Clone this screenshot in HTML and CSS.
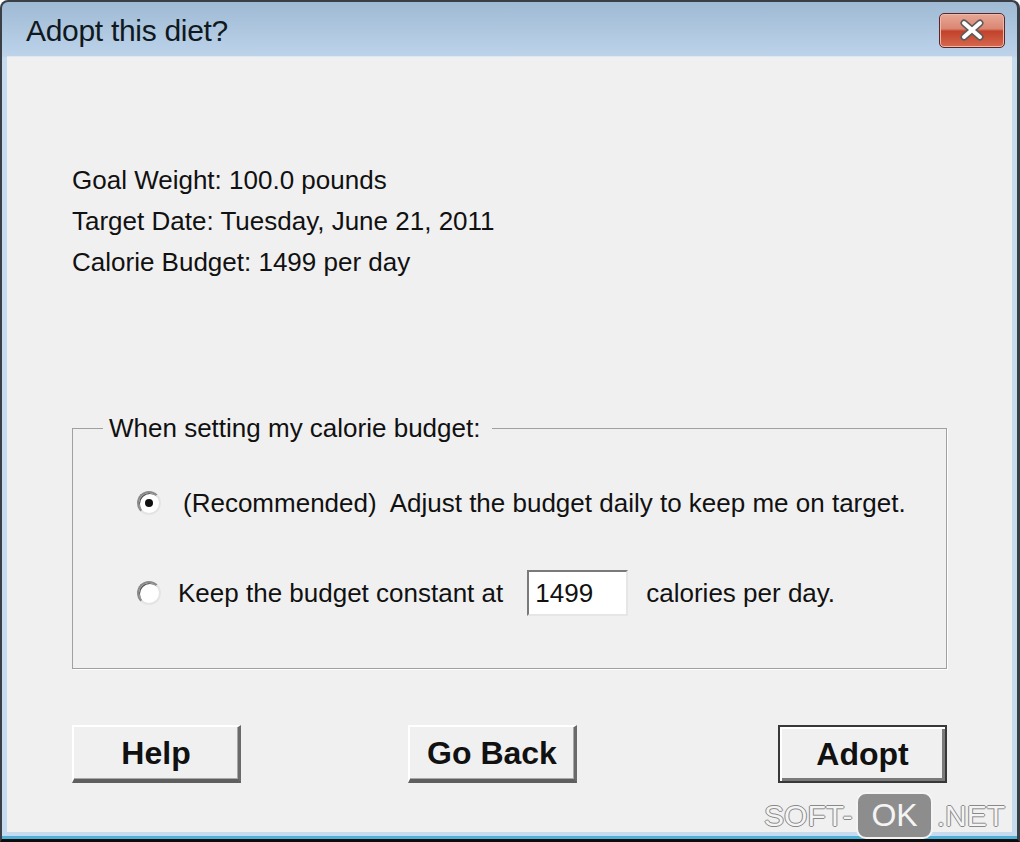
FILE: index.html
```html
<!DOCTYPE html>
<html lang="en">
<head>
    <meta charset="UTF-8">
    <title>Adopt this diet?</title>
    <link rel="stylesheet" href="styles.css">
</head>
<body>
<div class="window">
    <div class="titlebar">
        <span class="title">Adopt this diet?</span>
        <span class="close">
            <svg width="28" height="22" viewBox="0 0 28 22">
                <path d="M6 4 L22 18 M22 4 L6 18" stroke="#5b5b5b" stroke-width="7" stroke-linecap="round"/>
                <path d="M6 4 L22 18 M22 4 L6 18" stroke="#ffffff" stroke-width="4" stroke-linecap="round"/>
            </svg>
        </span>
    </div>

    <div class="client">
        <div class="info">
            <div>Goal Weight: 100.0 pounds</div>
            <div>Target Date: Tuesday, June 21, 2011</div>
            <div>Calorie Budget: 1499 per day</div>
        </div>

        <fieldset class="group">
            <legend>When setting my calorie budget:</legend>
            <div class="option">
                <span class="radio checked"></span>
                <span class="label first">(Recommended)&nbsp; Adjust the budget daily to keep me on target.</span>
            </div>
            <div class="option">
                <span class="radio"></span>
                <span class="label">Keep the budget constant at</span>
                <span class="field">1499</span>
                <span class="label after">calories per day.</span>
            </div>
        </fieldset>

        <div class="buttons">
            <button class="btn">Help</button>
            <button class="btn back">Go Back</button>
            <button class="btn default">Adopt</button>
        </div>
    </div>

    <div class="watermark">SOFT-<span class="ok">OK</span>.NET</div>
</div>
</body>
</html>
```

FILE: styles.css
```css
body {
    margin: 0;
    overflow: hidden;
    font-family: "Liberation Sans", Arial, sans-serif;
}
.window {
    position: relative;
    width: 1020px;
    height: 842px;
    box-sizing: border-box;
    border: 2px solid #3a3f45;
    border-right-width: 3px;
    border-bottom: 3px solid #0c0c0c;
    border-radius: 8px 8px 0 0;
    padding-bottom: 7px;
    background: linear-gradient(#9fbad4, #bcd3ea 54px, #c6dbef 56px);
    box-shadow: inset 0 -3px 0 #4fb0d8;
    display: flex;
    flex-direction: column;
}
.titlebar {
    height: 50px;
    padding: 4px 12px 0 24px;
    display: flex;
    align-items: center;
    justify-content: space-between;
}
.title {
    font-size: 30px;
    color: #101820;
    letter-spacing: -0.3px;
}
.close {
    width: 64px;
    height: 33px;
    margin-top: -2px;
    border: 1px solid #5a2626;
    border-radius: 5px;
    background: linear-gradient(#e8a795, #d98672 45%, #c2412a 52%, #d5694f);
    box-shadow: inset 0 0 0 1px #f0b8a8;
    display: flex;
    align-items: center;
    justify-content: center;
}
.client {
    flex: 1;
    margin: 0 5px;
    background: #f0f0f0;
    color: #111;
    font-size: 26px;
    border-top: 1px solid #dfe8f1;
}
.info {
    padding: 103px 0 0 65px;
    line-height: 41px;
}
.group {
    margin: 130px 65px 0;
    padding: 37px 0 52px 0;
    border: 1px solid #a0a0a0;
    box-shadow: 1px 1px 0 #fff;
}
.group legend {
    margin-left: 30px;
    padding: 0 12px 0 6px;
    line-height: 30px;
}
.option {
    height: 46px;
    padding-left: 64px;
    display: flex;
    align-items: center;
}
.option + .option {
    margin-top: 44px;
}
.radio {
    position: relative;
    width: 20px;
    height: 20px;
    border-radius: 50%;
    border: 2px solid;
    border-color: #8a8a8a #e4e4e4 #e4e4e4 #8a8a8a;
    background: #fff;
    box-shadow: inset 1px 1px 0 #555;
    flex: none;
}
.radio.checked::after {
    content: "";
    position: absolute;
    left: 6px;
    top: 6px;
    width: 8px;
    height: 8px;
    border-radius: 50%;
    background: #111;
}
.label {
    margin-left: 17px;
}
.label.first {
    margin-left: 22px;
}
.label.after {
    margin-left: 18px;
}
.field {
    margin-left: 24px;
    box-sizing: border-box;
    width: 101px;
    height: 46px;
    padding-left: 6px;
    line-height: 42px;
    background: #fff;
    border: 2px solid;
    border-color: #7a7a7a #e6e6e6 #e6e6e6 #7a7a7a;
}
.buttons {
    display: flex;
    padding: 0 65px;
    margin-top: 56px;
}
.btn {
    width: 169px;
    height: 58px;
    box-sizing: border-box;
    font-family: "Liberation Sans", Arial, sans-serif;
    font-size: 32px;
    font-weight: bold;
    color: #111;
    background: #f0f0f0;
    border-style: solid;
    border-width: 2px 3px 4px 2px;
    border-color: #ffffff #6a6a6a #5f5f5f #ffffff;
    box-shadow: inset -1px -1px 0 #a8a8a8;
    padding: 0;
}
.btn.back {
    margin-left: 167px;
}
.btn.default {
    margin-left: auto;
    border: 2px solid #383838;
    box-shadow: inset 2px 2px 0 #fff, inset -3px -3px 0 #7a7a7a;
}
.watermark {
    position: absolute;
    right: 12px;
    bottom: 0px;
    display: flex;
    align-items: center;
    font-size: 30px;
    color: #f4f4f4;
    text-shadow: 1px 0 0 #888, -1px 0 0 #888, 0 1px 0 #888, 0 -1px 0 #888;
}
.ok {
    margin: 0 4px;
    padding: 0 13px;
    height: 43px;
    line-height: 43px;
    font-size: 32px;
    background: #8d8d8d;
    border-radius: 10px;
    border: 2px solid #f4f4f4;
    text-shadow: none;
}
```
